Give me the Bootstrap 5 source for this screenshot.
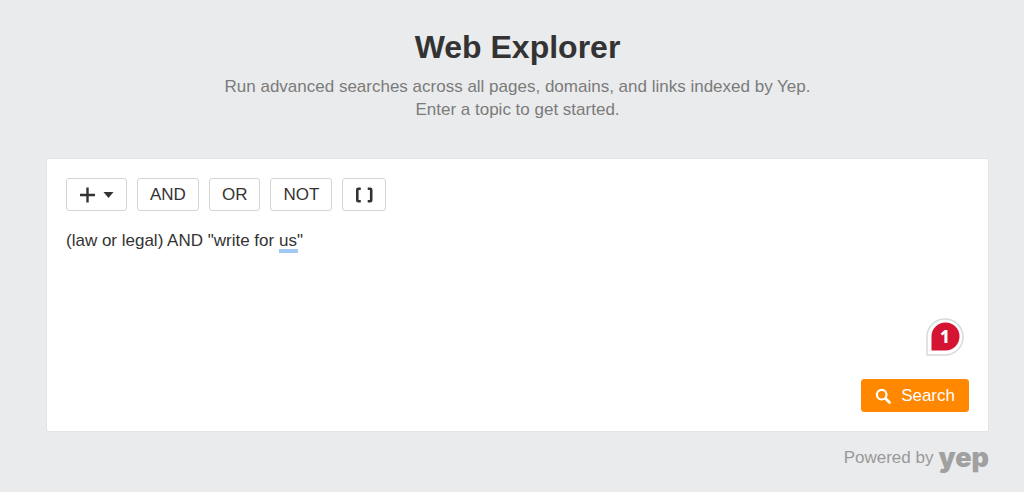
<!DOCTYPE html>
<html lang="en">
<head>
<meta charset="utf-8">
<meta name="viewport" content="width=device-width, initial-scale=1">
<title>Web Explorer</title>
<link href="https://cdn.jsdelivr.net/npm/bootstrap@5.3.0/dist/css/bootstrap.min.css" rel="stylesheet">
<style>
body { background: #eaebed; color: #333; font-family: "Liberation Sans", Arial, sans-serif; font-size: 17px; line-height: 22px; }
.page { padding: 28px 35px 12px 46px; }
.page-head { margin-bottom: 37px; }
.page-title { font-size: 32px; line-height: 39px; }
.intro { color: #7b7b7b; line-height: 23px; }
.panel { border: 1px solid #e3e4e6; border-radius: 2px; padding: 19px; }
.tools { gap: 10px; margin-bottom: 19px; }
.btn { --bs-btn-font-size: 17px; --bs-btn-line-height: 22px; --bs-btn-padding-x: 12px; --bs-btn-padding-y: 4px; --bs-btn-border-radius: 3px; height: 33px; }
.btn-tool { --bs-btn-color: #333; --bs-btn-border-color: #d4d4d4; --bs-btn-bg: #fff; --bs-btn-hover-bg: #f5f5f5; --bs-btn-hover-border-color: #bbb; }
.btn-search { --bs-btn-padding-x: 13px; --bs-btn-color: #fff; --bs-btn-bg: #ff8800; --bs-btn-border-color: #ff8800; --bs-btn-hover-color: #fff; --bs-btn-hover-bg: #ee7d00; gap: 10px; }
.query { height: 149px; color: #333; resize: none; outline: 0; }
.suggestion { left: 213px; top: 19px; width: 19px; height: 4px; background: #a1c9f2; }
.issues { right: 5px; bottom: 23px; }
.issues text { font: 800 17px "Noto Sans", sans-serif; }
.powered { color: #999; margin-top: 12px; gap: 5px; }
.brand { font: 900 27px/27px Inter, sans-serif; color: #a0a0a0; }
</style>
</head>
<body>
<main class="page">
  <header class="page-head text-center">
    <h1 class="page-title fw-bold mb-2">Web Explorer</h1>
    <p class="intro mb-0">Run advanced searches across all pages, domains, and links indexed by Yep.<br>Enter a topic to get started.</p>
  </header>
  <form class="panel bg-white" onsubmit="return false">
    <div class="tools d-flex flex-wrap">
      <button type="button" class="btn btn-tool d-flex align-items-center" aria-label="Add operator">
        <svg width="35" height="16" viewBox="0 0 35 16" aria-hidden="true"><path d="M8.500 .5v15M1 8h15" fill="none" stroke="#333" stroke-width="2.400"/><path d="M24.500 5h10l-5 6z" fill="#333"/></svg>
      </button>
      <button type="button" class="btn btn-tool">AND</button>
      <button type="button" class="btn btn-tool">OR</button>
      <button type="button" class="btn btn-tool">NOT</button>
      <button type="button" class="btn btn-tool d-flex align-items-center" aria-label="Group">
        <svg width="18" height="16" viewBox="0 0 18 16" aria-hidden="true"><path d="M5.800 1.800H3.300q-1 0-1 1v10.400q0 1 1 1h2.500M12.700 1.800h2.500q1 0 1 1v10.400q0 1-1 1h-2.500" fill="none" stroke="#333" stroke-width="2.600"/></svg>
      </button>
    </div>
    <div class="position-relative">
      <textarea class="query d-block w-100 border-0 p-0" aria-label="Search query" spellcheck="false">(law or legal) AND "write for us"</textarea>
      <span class="suggestion position-absolute"></span>
      <svg class="issues position-absolute" width="38" height="38" viewBox="0 0 38 38" role="img" aria-label="1 suggestion"><path d="M1 37V19A18 18 0 1 1 19 37Z" fill="#fff" stroke="#d5dade" stroke-width="1.500"/><path d="M5.500 32.500V18.500A14 14 0 1 1 19.500 32.500Z" fill="#d51333"/><text x="19" y="25" text-anchor="middle" fill="#fff">1</text></svg>
    </div>
    <div class="d-flex justify-content-end">
      <button type="submit" class="btn btn-search d-flex align-items-center">
        <svg width="16" height="16" viewBox="0 0 16 16" aria-hidden="true"><circle cx="6.700" cy="6.700" r="4.800" fill="none" stroke="#fff" stroke-width="2.200"/><path d="M10.300 10.300l4.200 4.200" stroke="#fff" stroke-width="2.800" stroke-linecap="round"/></svg>
        Search
      </button>
    </div>
  </form>
  <footer class="powered d-flex justify-content-end align-items-center">Powered by <a href="#" class="brand text-decoration-none">yep</a></footer>
</main>
<script src="https://cdn.jsdelivr.net/npm/bootstrap@5.3.0/dist/js/bootstrap.bundle.min.js"></script>
</body>
</html>
